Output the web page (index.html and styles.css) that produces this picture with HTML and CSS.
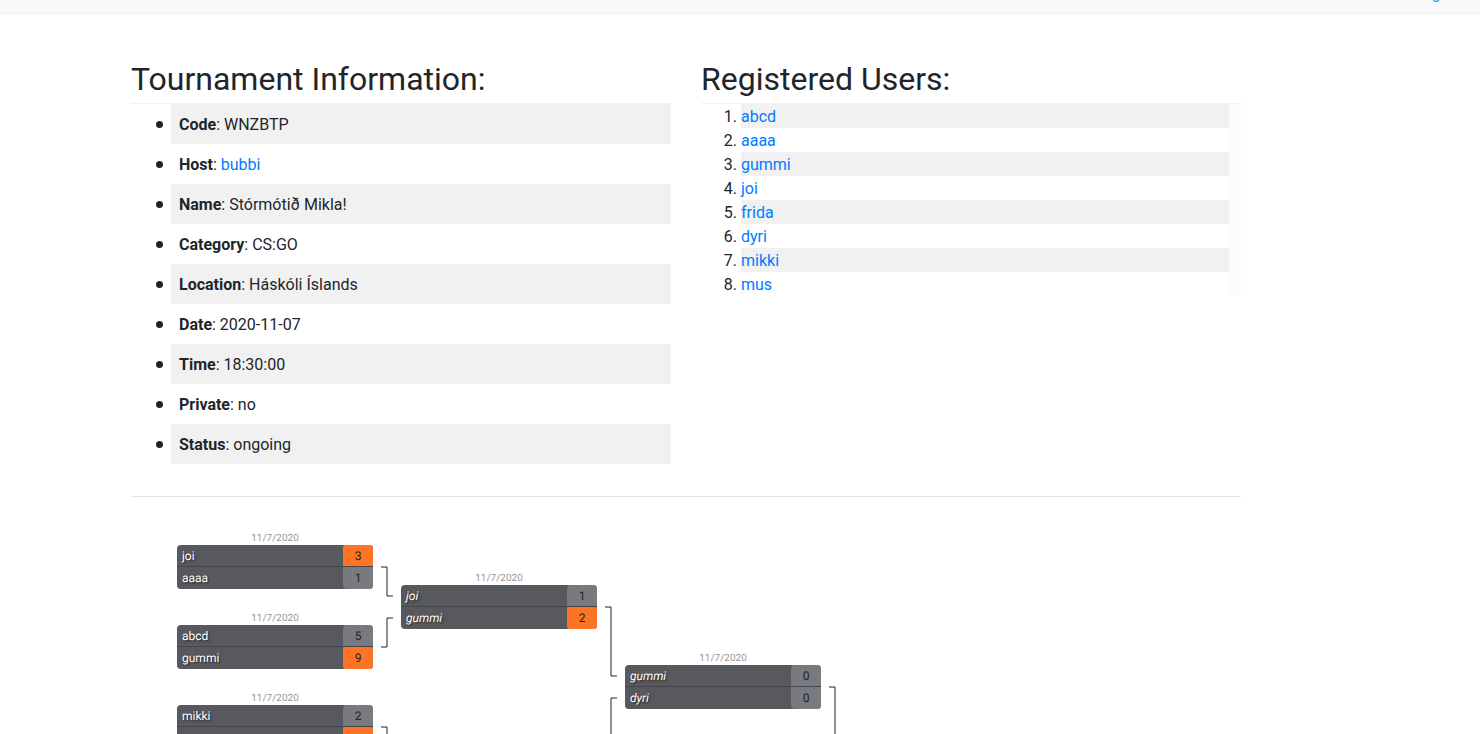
FILE: index.html
```html
<!DOCTYPE html>
<html lang="en">
<head>
<meta charset="utf-8">
<title>Tournament</title>
<link rel="stylesheet" href="styles.css">
</head>
<body>
<nav class="navbar"><a class="nav-link" href="#">Logout</a></nav>
<main class="container">
  <div class="row">
    <section class="col">
      <h2 class="heading">Tournament Information:</h2>
      <ul class="list info">
        <li><b>Code</b>: WNZBTP</li>
        <li><b>Host</b>: <a href="#">bubbi</a></li>
        <li><b>Name</b>: Stórmótið Mikla!</li>
        <li><b>Category</b>: CS:GO</li>
        <li><b>Location</b>: Háskóli Íslands</li>
        <li><b>Date</b>: 2020-11-07</li>
        <li><b>Time</b>: 18:30:00</li>
        <li><b>Private</b>: no</li>
        <li><b>Status</b>: ongoing</li>
      </ul>
    </section>
    <section class="col">
      <h2 class="heading">Registered Users:</h2>
      <ol class="list users">
        <li><a href="#">abcd</a></li>
        <li><a href="#">aaaa</a></li>
        <li><a href="#">gummi</a></li>
        <li><a href="#">joi</a></li>
        <li><a href="#">frida</a></li>
        <li><a href="#">dyri</a></li>
        <li><a href="#">mikki</a></li>
        <li><a href="#">mus</a></li>
      </ol>
    </section>
  </div>
  <hr class="divider">
  <svg class="bracket" width="760" height="240" role="img" aria-label="Tournament bracket">
    <defs>
      <g id="box">
        <rect class="box" width="196" height="44" rx="4"/>
        <rect class="score-box" x="166" width="30" height="44" rx="4"/>
      </g>
      <rect id="split" class="split" y="21" width="196" height="1"/>
    </defs>

    <path class="link" d="M250 70H256V99H262M250 150H256V121H262M250 230H256V259M474 110H480V179H486M486 201H480V260M698 190H704V260"/>

    <g transform="translate(46 48)">
      <text class="date" x="98" y="-4">11/7/2020</text>
      <use href="#box"/>
      <rect class="win" x="166" width="30" height="22" rx="3"/>
      <use href="#split"/>
      <text class="name" x="5" y="15">joi</text><text class="score" x="181" y="15">3</text>
      <text class="name" x="5" y="37">aaaa</text><text class="score" x="181" y="37">1</text>
    </g>
    <g transform="translate(46 128)">
      <text class="date" x="98" y="-4">11/7/2020</text>
      <use href="#box"/>
      <rect class="win" x="166" y="22" width="30" height="22" rx="3"/>
      <use href="#split"/>
      <text class="name" x="5" y="15">abcd</text><text class="score" x="181" y="15">5</text>
      <text class="name" x="5" y="37">gummi</text><text class="score" x="181" y="37">9</text>
    </g>
    <g transform="translate(46 208)">
      <text class="date" x="98" y="-4">11/7/2020</text>
      <use href="#box"/>
      <rect class="win" x="166" y="22" width="30" height="22" rx="3"/>
      <use href="#split"/>
      <text class="name" x="5" y="15">mikki</text><text class="score" x="181" y="15">2</text>
    </g>
    <g transform="translate(270 88)">
      <text class="date" x="98" y="-4">11/7/2020</text>
      <use href="#box"/>
      <rect class="win" x="166" y="22" width="30" height="22" rx="3"/>
      <use href="#split"/>
      <text class="name later" x="5" y="15">joi</text><text class="score" x="181" y="15">1</text>
      <text class="name later" x="5" y="37">gummi</text><text class="score" x="181" y="37">2</text>
    </g>
    <g transform="translate(494 168)">
      <text class="date" x="98" y="-4">11/7/2020</text>
      <use href="#box"/>
      <use href="#split"/>
      <text class="name later" x="5" y="15">gummi</text><text class="score" x="181" y="15">0</text>
      <text class="name later" x="5" y="37">dyri</text><text class="score" x="181" y="37">0</text>
    </g>
  </svg>
</main>
</body>
</html>
```
FILE: styles.css
```css
* { box-sizing: border-box; }
body {
  margin: 0;
  height: 100vh;
  overflow: hidden;
  background: #fff;
  color: #212529;
  font: 16px/24px Roboto, "Liberation Sans", sans-serif;
}
a { color: #007bff; text-decoration: none; }
.navbar {
  display: flex;
  justify-content: flex-end;
  align-items: flex-end;
  height: 12px;
  padding: 0 16px 6px;
  overflow: hidden;
  background: #f7f9fb;
  box-shadow: 0 1px 4px rgba(0, 0, 0, .1);
}
.nav-link { color: #2a9fd6; }
.container {
  max-width: 1140px;
  margin: 48px 0 0 116px;
  padding: 0 15px;
}
.row { display: flex; gap: 30px; align-items: flex-start; }
.col { flex: 1; }
.heading {
  margin: 0;
  padding-bottom: 5px;
  border-bottom: 1px solid #f2f2f2;
  font-size: 32px;
  line-height: 38px;
  font-weight: 400;
}
.list { margin: 0; padding: 0 0 0 40px; }
.list li:nth-child(odd) { background: #f1f1f1; }
.info { list-style: none; }
.info li { position: relative; padding: 9px 8px 7px; }
.info li::before {
  content: "";
  position: absolute;
  left: -15px;
  top: 17px;
  width: 7px;
  height: 7px;
  border-radius: 50%;
  background: #212529;
}
.users { border-right: 12px solid #fcfcfc; }
.users li { padding-top: 2px; line-height: 22px; }
.divider {
  margin: 32px 0 0;
  border: 0;
  border-top: 1px solid #e5e5e5;
}
.bracket { display: block; max-width: 100%; text-rendering: geometricPrecision; }
.box { fill: #58595e; }
.score-box { fill: #787a80; }
.win { fill: #ff7324; }
.split { fill: #45464a; }
.link { fill: none; stroke: #222; }
.date { fill: #999; font-size: 10px; text-anchor: middle; }
.name { fill: #fff; font-size: 12px; text-shadow: 1px 1px 2px #222; }
.later { font-style: italic; }
.score { fill: #222; font-size: 12px; text-anchor: middle; }
```
